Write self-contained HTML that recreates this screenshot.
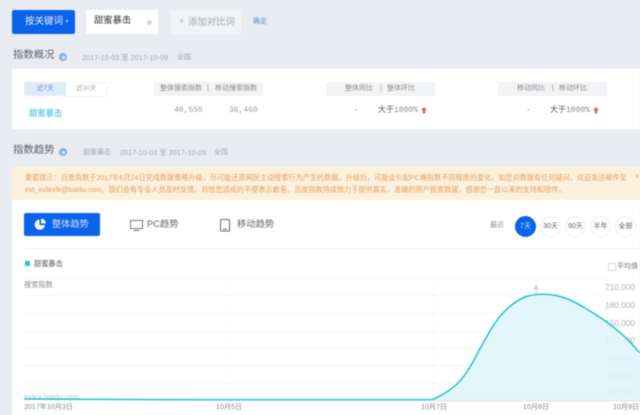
<!DOCTYPE html>
<html lang="zh">
<head>
<meta charset="utf-8">
<style>
html,body{margin:0;padding:0;width:640px;height:415px;overflow:hidden;background:#e9edf2}
body{font-family:"Liberation Sans","Noto Sans CJK SC",sans-serif;position:relative}
#w{position:absolute;left:0;top:0;width:640px;height:415px;overflow:hidden;filter:blur(.45px)}
.a{position:absolute;white-space:nowrap;line-height:1}
.b{position:absolute}
.m{font-family:"Liberation Mono","Noto Sans CJK SC",monospace}
.help{position:absolute;width:8px;height:8px;border-radius:50%;background:#8fb0dc}
.help:after{content:"";position:absolute;left:2.5px;top:2.5px;width:3px;height:3px;border-radius:50%;background:#dfe8f5}
.th{position:absolute;top:82px;height:14px;width:109px;background:#f2f3f5}
.tt{position:absolute;top:85px;font-size:7px;line-height:1;color:#8c8c8c;white-space:nowrap}
.c{position:absolute;top:216px;width:19px;height:19px;border-radius:50%;background:#fff;border:1px solid #f0f0f0;font-size:7px;line-height:19px;text-align:center;color:#666}
.h{position:absolute;left:24px;width:586px;height:1px;background:#f7f7f7}
.v{position:absolute;top:278px;width:1px;height:122px;background:#f8f8f8}
.y{position:absolute;right:5px;font-size:8.3px;line-height:1;color:#aeb2b7}
.x{position:absolute;top:404px;font-size:7.1px;line-height:1;color:#8a8a8a;white-space:nowrap}
</style>
</head>
<body>
<div id="w">
<!-- top keyword bar -->
<div class="b" style="left:12px;top:10px;width:63px;height:23.5px;background:#0a63ea;border-radius:2px"></div>
<div class="a" style="left:25px;top:17px;font-size:9.5px;color:#e6effd">按关键词</div>
<div class="b" style="left:66px;top:20px;width:2px;height:2px;background:#fff;border-radius:50%"></div>
<div class="b" style="left:86px;top:10px;width:72px;height:23.5px;background:#fff"></div>
<div class="a" style="left:94px;top:16px;font-size:9.3px;color:#333">甜蜜暴击</div>
<div class="b" style="left:147px;top:19.5px;width:5px;height:5px;border-radius:50%;background:#cfd3d6"></div>
<div class="b" style="left:171px;top:10px;width:70px;height:23.5px;background:#f1f3f5"></div>
<div class="a" style="left:179px;top:17px;font-size:9px;color:#a5a9ad">+</div>
<div class="a" style="left:188px;top:17px;font-size:9.4px;color:#a5a9ad">添加对比词</div>
<div class="a" style="left:253px;top:18px;font-size:7px;color:#6288c4">确定</div>

<!-- overview heading -->
<div class="a" style="left:13px;top:51px;font-size:10.4px;color:#5a5f66">指数概况</div>
<div class="help" style="left:59px;top:53px"></div>
<div class="a" style="left:82px;top:53.500px;font-size:7.300px;color:#a3a7ab">2017-10-03 至 2017-10-09</div>
<div class="a" style="left:177px;top:53.500px;font-size:7px;color:#a3a7ab">全国</div>

<!-- overview panel -->
<div class="b" style="left:12px;top:69px;width:628px;height:60px;background:#fff"></div>
<div class="b" style="left:24px;top:82px;width:42px;height:14px;background:#e0ebfa"></div>
<div class="a" style="left:37px;top:85.500px;font-size:6.500px;color:#5f87c8">近7天</div>
<div class="b" style="left:66px;top:82px;width:41px;height:13px;border:1px solid #f1f3f6;border-left:0"></div>
<div class="a" style="left:76px;top:85.500px;font-size:6.500px;color:#a5a8ab">近30天</div>
<div class="a" style="left:29px;top:109px;font-size:8.300px;color:#35b4dc">甜蜜暴击</div>

<div class="th" style="left:154px"></div>
<div class="tt" style="left:160px">整体搜索指数</div>
<div class="tt" style="left:207px">|</div>
<div class="tt" style="left:215px">移动搜索指数</div>
<div class="th" style="left:326px"></div>
<div class="tt" style="left:345px">整体同比</div>
<div class="tt" style="left:380px">|</div>
<div class="tt" style="left:387px">整体环比</div>
<div class="th" style="left:498px"></div>
<div class="tt" style="left:517px">移动同比</div>
<div class="tt" style="left:552px">|</div>
<div class="tt" style="left:559px">移动环比</div>

<div class="a m" style="left:174px;top:107px;font-size:8px;color:#999">40,555</div>
<div class="a m" style="left:229px;top:107px;font-size:8px;color:#999">36,460</div>
<div class="a" style="left:355px;top:106px;font-size:8px;color:#777">-</div>
<div class="a" style="left:378px;top:106px;font-size:8px;color:#555">大于<span class="m" style="color:#888">1000%</span></div>
<svg class="b" style="left:420.500px;top:107px" width="6" height="7"><path d="M3 0L6 3H4.200V6.500H1.800V3H0Z" fill="#dd5a4f"/></svg>
<div class="a" style="left:527px;top:106px;font-size:8px;color:#777">-</div>
<div class="a" style="left:550px;top:106px;font-size:8px;color:#555">大于<span class="m" style="color:#888">1000%</span></div>
<svg class="b" style="left:592.500px;top:107px" width="6" height="7"><path d="M3 0L6 3H4.200V6.500H1.800V3H0Z" fill="#dd5a4f"/></svg>

<!-- trend heading -->
<div class="a" style="left:13px;top:146px;font-size:10.4px;color:#5a5f66">指数趋势</div>
<div class="help" style="left:59px;top:148px"></div>
<div class="a" style="left:83px;top:148.500px;font-size:7px;color:#a3a7ab">甜蜜暴击</div>
<div class="a" style="left:120px;top:148.500px;font-size:7.300px;color:#a3a7ab">2017-10-03 至 2017-10-09</div>
<div class="a" style="left:214px;top:148.500px;font-size:7px;color:#a3a7ab">全国</div>

<!-- notice -->
<div class="b" style="left:12px;top:167px;width:628px;height:33px;background:#fdf1de"></div>
<div class="a" style="left:25px;top:175px;font-size:7.150px;color:#e2a05e">重要提示：百度指数于2017年6月24日完成数据策略升级，尽可能还原网民主动搜索行为产生的数据。升级后，可能会引起PC端指数不同程度的变化。如您对数据有任何疑问，欢迎发送邮件至</div>
<div class="a" style="left:25px;top:186.500px;font-size:7.150px;color:#e2a05e">ext_indexfk@baidu.com。我们会有专业人员及时反馈。对给您造成的不便表示歉意。百度指数持续致力于提供真实、准确的用户搜索数据，感谢您一直以来的支持和陪伴。</div>
<div class="a" style="left:634px;top:173px;font-size:8px;color:#dcb98c">✕</div>

<!-- chart panel -->
<div class="b" style="left:12px;top:200px;width:628px;height:215px;background:#fff"></div>
<div class="b" style="left:24px;top:213px;width:76px;height:23px;background:#0a63ea;border-radius:2px"></div>
<svg class="b" style="left:34px;top:218px" width="13" height="13"><path d="M5.500 1.500A5.200 5.200 0 1 0 11 7H5.500Z" fill="#f0f5fe"/><path d="M7 0.500A5 5 0 0 1 12 5.500H7Z" fill="#f0f5fe"/></svg>
<div class="a" style="left:52px;top:219.500px;font-size:9.200px;color:#cfe0fb">整体趋势</div>
<svg class="b" style="left:130px;top:220px" width="13" height="11" fill="none" stroke="#777"><rect x=".5" y=".5" width="12" height="8"/><path d="M3.500 10.500H9.500"/></svg>
<div class="a" style="left:147px;top:219.500px;font-size:9.300px;color:#666">PC趋势</div>
<svg class="b" style="left:220px;top:219px" width="10" height="12.500" fill="none" stroke="#666"><rect x=".5" y=".5" width="9" height="11.500" rx="1"/><path d="M3 10H7"/></svg>
<div class="a" style="left:237px;top:219.500px;font-size:9.300px;color:#666">移动趋势</div>

<div class="a" style="left:490px;top:222px;font-size:7px;color:#8d8d8d">最近</div>
<div class="c" style="left:515px;background:#0a63ea;border-color:#0a63ea;color:#d8e6fc">7天</div>
<div class="c" style="left:540px">30天</div>
<div class="c" style="left:565px">90天</div>
<div class="c" style="left:590px">半年</div>
<div class="c" style="left:615px">全部</div>
<div class="b" style="left:24px;top:248px;width:616px;height:1px;background:#eef0f3"></div>

<div class="b" style="left:25px;top:261px;width:5px;height:5px;background:#1ec7dd"></div>
<div class="a" style="left:34px;top:259.500px;font-size:7.200px;color:#555">甜蜜暴击</div>
<div class="b" style="left:608px;top:263px;width:6px;height:6px;border:1px solid #ddd"></div>
<div class="a" style="left:617px;top:262.500px;font-size:7px;color:#777">平均值</div>

<div class="a" style="left:24px;top:280.500px;font-size:7.200px;color:#8a8a8a">搜索指数</div>

<!-- grid -->
<div class="h" style="top:278px"></div>
<div class="h" style="top:295px"></div>
<div class="h" style="top:313px"></div>
<div class="h" style="top:331px"></div>
<div class="h" style="top:348px"></div>
<div class="h" style="top:365px"></div>
<div class="h" style="top:383px"></div>
<div class="v" style="left:229px"></div>
<div class="v" style="left:433px"></div>
<div class="v" style="left:536px"></div>

<div class="y" style="top:283px">210,000</div>
<div class="y" style="top:301px">180,000</div>
<div class="y" style="top:318.500px">150,000</div>
<div class="y" style="top:336px">120,000</div>
<div class="y" style="top:353.500px">90,000</div>
<div class="y" style="top:371px">60,000</div>
<div class="y" style="top:389px">30,000</div>

<div class="a" style="left:24px;top:393px;font-size:7.500px;color:#c0c4cb">index.baidu.com</div>

<svg class="b" style="left:0;top:270px" width="640" height="145">
<path d="M433 129.300C435 128.300 440.800 125.700 445 123C449.200 120.300 453.800 117.300 458 113C462.200 108.700 466 103.300 470 97C474 90.700 477.800 82.300 482 75C486.200 67.700 490.700 59.200 495 53C499.300 46.800 503 42.300 508 38C513 33.700 518.800 29.300 525 27C531.200 24.700 538.300 24.100 545 24.300C551.700 24.500 558.300 25.700 565 28C571.700 30.300 577.800 33.800 585 38C592.200 42.200 601.300 48.200 608 53C614.700 57.800 620 62.300 625 67C630 71.700 636 78.700 640 83V131H433Z" fill="#e0f5fb" fill-opacity=".9"/>
<path d="M24 129L200 129.800L433 129.800" fill="none" stroke="#22c0d6" stroke-width="1.500"/>
<path d="M433 129.300C435 128.300 440.800 125.700 445 123C449.200 120.300 453.800 117.300 458 113C462.200 108.700 466 103.300 470 97C474 90.700 477.800 82.300 482 75C486.200 67.700 490.700 59.200 495 53C499.300 46.800 503 42.300 508 38C513 33.700 518.800 29.300 525 27C531.200 24.700 538.300 24.100 545 24.300C551.700 24.500 558.300 25.700 565 28C571.700 30.300 577.800 33.800 585 38C592.200 42.200 601.300 48.200 608 53C614.700 57.800 620 62.300 625 67C630 71.700 636 78.700 640 83" fill="none" stroke="#22c0d6" stroke-width="1.500"/>
<path d="M433 131H639" stroke="#dfe3e6" stroke-width="1"/>
<path d="M536 19.500V24" stroke="#a8cbe0" stroke-width=".7"/>
</svg>
<div class="a" style="left:533.500px;top:284px;font-size:7.500px;color:#8fb5d5">A</div>

<div class="x" style="left:24px">2017年10月3日</div>
<div class="x" style="left:216px">10月5日</div>
<div class="x" style="left:421px">10月7日</div>
<div class="x" style="left:523px">10月8日</div>
<div class="x" style="left:613px">10月9日</div>
</div>
</body>
</html>
